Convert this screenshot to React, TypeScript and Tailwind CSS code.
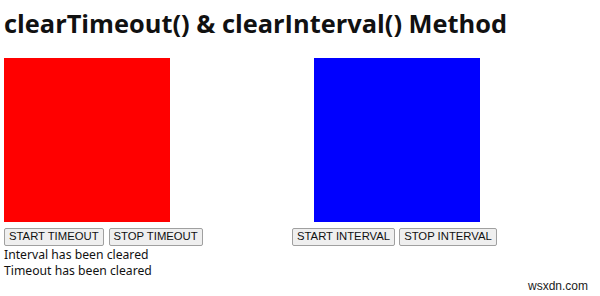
export default function App() {
  const btn =
    "h-[18px] px-[4px] border border-[#a0a0a0] bg-[#efefef] rounded-[2px] text-[11.3px] leading-none text-[#111] [font-family:'Liberation_Sans',Arial,sans-serif]";
  return (
    <div className="relative w-[600px] h-[296px] bg-white text-black overflow-hidden">
      <h1 className="pl-1 pt-[5px] text-[25.4px] leading-[36px] font-bold text-[#111] [font-family:'Open_Sans','Noto_Sans',sans-serif]">
        clearTimeout() &amp; clearInterval() Method
      </h1>

      <div className="flex mt-[17px]">
        {/* timeout column */}
        <div className="w-[292px] pl-1 flex flex-col">
          <div className="w-[166px] h-[164px] bg-[#ff0000]" />
          <div className="flex gap-[5px] mt-[6px]">
            <button className={btn}>START TIMEOUT</button>
            <button className={btn}>STOP TIMEOUT</button>
          </div>
          <div className="mt-[1px] text-[12.2px] leading-[16px] text-[#111] [font-family:'Noto_Sans','Open_Sans',sans-serif]">
            <p>Interval has been cleared</p>
            <p>Timeout has been cleared</p>
          </div>
        </div>

        {/* interval column */}
        <div className="flex flex-col">
          <div className="ml-[22px] w-[166px] h-[164px] bg-[#0000ff]" />
          <div className="flex gap-[4px] mt-[6px]">
            <button className={btn}>START INTERVAL</button>
            <button className={btn}>STOP INTERVAL</button>
          </div>
        </div>
      </div>

      <span className="absolute right-[12px] bottom-[4px] text-[12px] leading-none text-[#222] [font-family:'Liberation_Sans',Arial,sans-serif]">
        wsxdn.com
      </span>
    </div>
  );
}
